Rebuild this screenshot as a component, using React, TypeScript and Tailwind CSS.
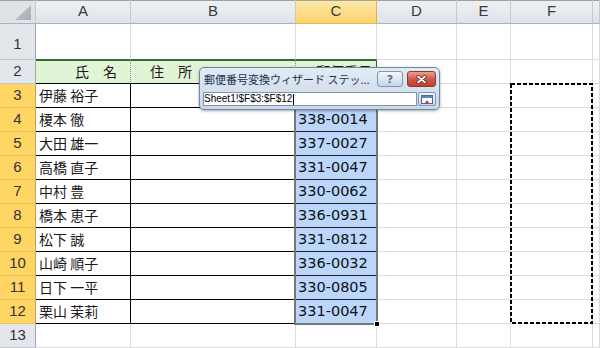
import React, { ReactNode } from 'react';

// Names and postal codes for rows 3-12
const NAMES = ['伊藤 裕子', '榎本 徹', '大田 雄一', '高橋 直子', '中村 豊', '橋本 恵子', '松下 誠', '山崎 順子', '日下 一平', '栗山 茉莉'];
const ZIPS = ['338-0001', '338-0014', '337-0027', '331-0047', '330-0062', '336-0931', '331-0812', '336-0032', '330-0805', '331-0047'];

const GRID = 'border-r border-b border-[#dadcdd] bg-white';

function ColHead({ label, active }: { label: string; active?: boolean }) {
  return (
    <div
      className={
        active
          ? 'flex items-center justify-center border-r border-b border-[#e0b54e] bg-linear-to-b from-[#fdeaa8] to-[#f9d36c] text-[15px] text-[#3a3a3a] shadow-[inset_0_1px_0_#a0a0a0]'
          : 'flex items-center justify-center border-r border-b border-r-[#c5cad1] border-b-[#aab1bb] bg-linear-to-b from-[#eef1f4] to-[#dfe3e8] text-[15px] text-[#3a3a3a] shadow-[inset_0_1px_0_#a0a0a0]'
      }
    >
      {label}
    </div>
  );
}

function RowHead({ n, active, tall }: { n: number; active?: boolean; tall?: boolean }) {
  return (
    <div
      className={`flex justify-center border-r border-b text-[15px] text-[#333] ${tall ? 'items-end pb-[4px]' : 'items-center'} ${
        active ? 'bg-[#ffd663] border-r-[#c9a447] border-b-[#e8c25c]' : 'bg-[#e3e7ec] border-r-[#9ea7b2] border-b-[#c4cad1]'
      }`}
    >
      {n}
    </div>
  );
}

function Cell({ className, children }: { className: string; children?: ReactNode }) {
  return <div className={className}>{children}</div>;
}

function Dialog() {
  return (
    <div className="absolute left-[199px] top-[67px] w-[241px] h-[43px] rounded-[5px] border border-[#6f87a6] bg-linear-to-b from-[#e2eaf4] to-[#cbd8e8] px-[3px] shadow-[0_1px_3px_rgba(0,0,0,0.35)]">
      <div className="flex h-[19px] items-center pt-[3px]">
        <span className="flex-1 whitespace-nowrap pl-[1px] font-['Noto_Sans_CJK_JP',sans-serif] text-[11px] leading-none text-[#1e3250]">
          郵便番号変換ウィザード ステッ...
        </span>
        <div className="flex gap-[4px]">
          <div className="flex h-[16px] w-[26px] items-center justify-center rounded-[3px] border border-[#8196b3] bg-linear-to-b from-[#f4f7fb] to-[#c8d5e6] font-['DejaVu_Sans',sans-serif] text-[11px] font-bold leading-none text-[#557196]">
            ?
          </div>
          <div className="flex h-[16px] w-[29px] items-center justify-center rounded-[3px] border border-[#8b3a33] bg-linear-to-b from-[#e8a093] via-[#d05846] to-[#c4412f]">
            <svg width="11" height="9" viewBox="0 0 11 9">
              <path d="M2 1.5 L9 7.5 M9 1.5 L2 7.5" stroke="#5a1a14" strokeWidth="3.2" strokeLinecap="round" />
              <path d="M2 1.5 L9 7.5 M9 1.5 L2 7.5" stroke="#ffffff" strokeWidth="1.8" strokeLinecap="round" />
            </svg>
          </div>
        </div>
      </div>
      <div className="mt-[5px] flex gap-[1px]">
        <div className="flex h-[14px] w-[214px] items-center border border-[#7f94b1] bg-white font-['Liberation_Sans',sans-serif] text-[10px] leading-none text-black">
          <span>Sheet1!$F$3:$F$12</span>
          <span className="ml-[1px] h-[11px] w-px bg-black" />
        </div>
        <div className="flex h-[14px] w-[18px] items-center justify-center rounded-[2px] border border-[#8196b3] bg-linear-to-b from-[#f4f7fb] to-[#ccd8e7]">
          <svg width="12" height="9" viewBox="0 0 12 9">
            <rect x="0.5" y="0.5" width="11" height="8" fill="#ffffff" stroke="#4a6a96" />
            <rect x="1" y="1" width="10" height="2" fill="#5c86c0" />
            <path d="M4 8 L6 5 L8 8 Z" fill="#d23a2a" />
          </svg>
        </div>
      </div>
    </div>
  );
}

export default function App() {
  return (
    <div className="relative h-[348px] w-[600px] overflow-hidden bg-white font-['Liberation_Sans',sans-serif] text-[#222]">
      <div className="grid grid-cols-[36px_95px_165px_81px_80px_54px_82px_1fr] grid-rows-[24px_36px_repeat(12,24px)]">
        {/* column headers */}
        <div className="relative border-r border-b border-r-[#c5cad1] border-b-[#aab1bb] bg-[#dfe3e8] shadow-[inset_0_1px_0_#a0a0a0]">
          <svg className="absolute left-0 top-0" width="35" height="23" viewBox="0 0 35 23">
            <defs>
              <linearGradient id="tri" x1="0" y1="0" x2="1" y2="1">
                <stop offset="0" stopColor="#c9cdd2" />
                <stop offset="1" stopColor="#a4a9b0" />
              </linearGradient>
            </defs>
            <path d="M15 20 L31 20 L31 5 Z" fill="url(#tri)" />
          </svg>
        </div>
        <ColHead label="A" />
        <ColHead label="B" />
        <ColHead label="C" active />
        <ColHead label="D" />
        <ColHead label="E" />
        <ColHead label="F" />
        <ColHead label="" />

        {/* row 1 */}
        <RowHead n={1} tall />
        <Cell className="border-r border-b border-r-[#dadcdd] border-b-[#2e6b2e] bg-white" />
        <Cell className="border-r border-b border-r-[#dadcdd] border-b-[#2e6b2e] bg-white" />
        <Cell className="border-r border-b border-r-[#dadcdd] border-b-[#2e6b2e] bg-white" />
        <Cell className={GRID} />
        <Cell className={GRID} />
        <Cell className={GRID} />
        <Cell className={GRID} />

        {/* row 2 : table head */}
        <RowHead n={2} />
        <Cell className="flex items-center border-r border-b border-r-[#8a8a8a] border-b-black bg-[#e2f4d6] pl-[39px] font-['Noto_Sans_CJK_JP',sans-serif] text-[14px] text-[#1a1a1a] shadow-[inset_0_1px_0_#2e6b2e] [border-right-style:dotted]">
          氏　名
        </Cell>
        <Cell className="flex items-center border-r border-b border-r-[#8a8a8a] border-b-black bg-[#e2f4d6] pl-[19px] font-['Noto_Sans_CJK_JP',sans-serif] text-[14px] text-[#1a1a1a] shadow-[inset_0_1px_0_#2e6b2e] [border-right-style:dotted]">
          住　所
        </Cell>
        <Cell className="flex items-center border-r border-b border-r-[#2e6b2e] border-b-black bg-[#e2f4d6] pl-[20px] font-['Noto_Sans_CJK_JP',sans-serif] text-[14px] text-[#1a1a1a] shadow-[inset_0_1px_0_#2e6b2e]">
          郵便番号
        </Cell>
        <Cell className={GRID} />
        <Cell className={GRID} />
        <Cell className={GRID} />
        <Cell className={GRID} />

        {/* rows 3-12 */}
        {NAMES.map((name, i) => (
          <React.Fragment key={name}>
            <RowHead n={i + 3} active />
            <Cell className="flex items-center border-r border-b border-black bg-white pl-[3px] font-['Noto_Sans_CJK_JP',sans-serif] text-[14px] text-[#1a1a1a]">
              {name}
            </Cell>
            <Cell className="border-r border-b border-black bg-white" />
            <Cell className="flex items-center border-r border-b border-[#1e1e1e] bg-[#bad7fb] pl-[2px] font-['DejaVu_Sans',sans-serif] text-[14.5px] text-[#111]">
              {ZIPS[i]}
            </Cell>
            <Cell className={GRID} />
            <Cell className={GRID} />
            <Cell className={GRID} />
            <Cell className={GRID} />
          </React.Fragment>
        ))}

        {/* row 13 */}
        <RowHead n={13} />
        <Cell className={GRID} />
        <Cell className={GRID} />
        <Cell className={GRID} />
        <Cell className={GRID} />
        <Cell className={GRID} />
        <Cell className={GRID} />
        <Cell className={GRID} />
      </div>

      {/* selection outline on C3:C12 */}
      <div className="absolute left-[294px] top-[82px] h-[243px] w-[84px] border-2 border-[#767676]" />
      <div className="absolute left-[374px] top-[321px] h-[6px] w-[6px] border border-white bg-black" />

      {/* copy marquee on F3:F12 */}
      <svg className="absolute left-[510px] top-[83px]" width="84" height="242" viewBox="0 0 84 242">
        <rect x="1" y="1" width="81" height="239" fill="none" stroke="#000" strokeWidth="2" strokeDasharray="4 2" />
      </svg>

      <Dialog />
    </div>
  );
}
